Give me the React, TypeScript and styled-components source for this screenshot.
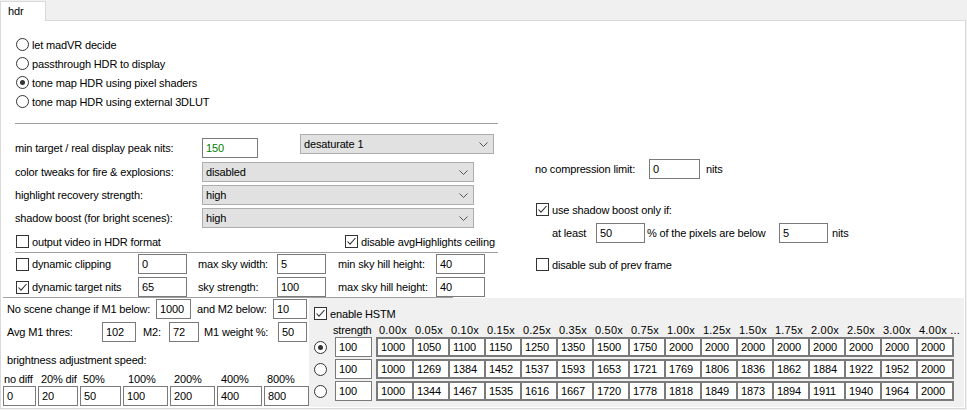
import React from 'react';
import styled, { createGlobalStyle } from 'styled-components';

const GlobalStyle = createGlobalStyle`
  html, body {
    margin: 0;
    padding: 0;
    background: #f0f0f0;
  }
  body {
    font-family: 'Liberation Sans', Arial, sans-serif;
    font-size: 11px;
    letter-spacing: -0.15px;
    color: #000;
  }
  * { box-sizing: border-box; }
`;

const Window = styled.div`
  width: 967px;
  height: 410px;
  background: #f0f0f0;
`;

const TabStrip = styled.div`
  display: flex;
  height: 20px;
  padding-top: 1px;
`;

const Tab = styled.div`
  width: 46px;
  height: 20px;
  padding-left: 7px;
  line-height: 18px;
  background: #fff;
  border: 1px solid #d9d9d9;
  border-bottom: none;
  position: relative;
  z-index: 1;
`;

const Panel = styled.div`
  width: 966px;
  background: #fff;
  border: 1px solid #d9d9d9;
  padding-bottom: 1px;
`;

const TopArea = styled.div`
  display: flex;
  height: 276px;
`;

const LeftColumn = styled.div`
  width: 497px;
  padding-left: 14px;
  display: flex;
  flex-direction: column;
`;

const RightColumn = styled.div`
  margin-left: 37px;
  display: flex;
  flex-direction: column;
`;

const RadioList = styled.div`
  margin-top: 14px;
  display: flex;
  flex-direction: column;
`;

const RadioRow = styled.div`
  display: flex;
  align-items: center;
  height: 19px;
  padding-left: 1px;
  gap: 3px;
`;

const RadioCircle = styled.span<{ $checked?: boolean }>`
  width: 13px;
  height: 13px;
  border-radius: 50%;
  border: 1px solid #333;
  background: #fff;
  display: flex;
  align-items: center;
  justify-content: center;
  flex: none;
  &::after {
    content: '';
    display: ${p => (p.$checked ? 'block' : 'none')};
    width: 5px;
    height: 5px;
    border-radius: 50%;
    background: #333;
  }
`;

const Separator = styled.div<{ $top: number; $width: number; $left?: number }>`
  margin-top: ${p => p.$top}px;
  margin-left: ${p => p.$left ?? 0}px;
  width: ${p => p.$width}px;
  height: 1px;
  background: #a0a0a0;
  flex: none;
`;

const FormRow = styled.div<{ $top: number; $height?: number; $align?: string }>`
  display: flex;
  align-items: ${p => p.$align ?? 'center'};
  margin-top: ${p => p.$top}px;
  height: ${p => p.$height ?? 20}px;
  flex: none;
`;

const Label = styled.span<{ $width?: number; $left?: number }>`
  width: ${p => (p.$width ? `${p.$width}px` : 'auto')};
  margin-left: ${p => p.$left ?? 0}px;
  height: 20px;
  line-height: 20px;
  white-space: nowrap;
  flex: none;
`;

const TextBox = styled.div<{ $width: number; $green?: boolean }>`
  width: ${p => p.$width}px;
  height: 20px;
  line-height: 18px;
  padding-left: 3px;
  border: 1px solid #7a7a7a;
  background: #fff;
  color: ${p => (p.$green ? '#008000' : '#000')};
  flex: none;
  white-space: nowrap;
  overflow: hidden;
`;

const SelectBox = styled.div<{ $width: number; $left?: number; $top?: boolean }>`
  width: ${p => p.$width}px;
  margin-left: ${p => p.$left ?? 0}px;
  align-self: ${p => (p.$top ? 'flex-start' : 'center')};
  height: 20px;
  padding: 0 5px 0 3px;
  border: 1px solid #adadad;
  background: #e1e1e1;
  display: flex;
  align-items: center;
  justify-content: space-between;
  flex: none;
`;

const Chevron = () => (
  <svg width="9" height="5" viewBox="0 0 9 5">
    <polyline points="0.5,0.5 4.5,4.5 8.5,0.5" fill="none" stroke="#555" strokeWidth="1" />
  </svg>
);

const Select = ({ value, width, left, top }: { value: string; width: number; left?: number; top?: boolean }) => (
  <SelectBox $width={width} $left={left} $top={top}>
    <span>{value}</span>
    <Chevron />
  </SelectBox>
);

const CheckLine = styled.div<{ $left?: number }>`
  display: flex;
  align-items: center;
  gap: 3px;
  margin-left: ${p => p.$left ?? 0}px;
  white-space: nowrap;
`;

const Box = styled.span`
  width: 13px;
  height: 13px;
  border: 1px solid #333;
  background: #fff;
  display: flex;
  flex: none;
`;

const Check = ({ checked, label, left }: { checked?: boolean; label: string; left?: number }) => (
  <CheckLine $left={left}>
    <Box>
      {checked && (
        <svg width="11" height="11" viewBox="0 0 11 11">
          <polyline points="1.5,5.5 4,8.2 9.5,2" fill="none" stroke="#333" strokeWidth="1.1" />
        </svg>
      )}
    </Box>
    <span>{label}</span>
  </CheckLine>
);

const CheckPair = styled.div`
  display: grid;
  grid-template-columns: 329px auto;
  align-items: center;
  margin-top: 6px;
  height: 15px;
  padding-left: 1px;
`;

const DynGrid = styled.div`
  margin-top: 1px;
  display: grid;
  grid-template-columns: 123px 49px 90px 49px 110px 49px;
  grid-auto-rows: 20px;
  row-gap: 3px;
  align-items: center;
`;

const DynLabel = styled.span<{ $pad: number }>`
  padding-left: ${p => p.$pad}px;
  white-space: nowrap;
`;

const CheckRowR = styled.div<{ $top: number }>`
  margin-top: ${p => p.$top}px;
  height: 13px;
  display: flex;
  align-items: center;
  padding-left: 1px;
`;

const BottomArea = styled.div`
  display: flex;
  height: 109px;
`;

const BottomLeft = styled.div`
  width: 308px;
  display: flex;
  flex-direction: column;
  padding-left: 6px;
`;

const Caption = styled.div`
  margin-top: 10px;
  height: 16px;
  line-height: 16px;
`;

const SpeedRow = styled.div`
  display: flex;
  gap: 2px;
  margin-top: 5px;
  margin-left: -4px;
`;

const SpeedCell = styled.div<{ $width: number }>`
  width: ${p => p.$width}px;
  display: flex;
  flex-direction: column;
`;

const SpeedLabel = styled.span<{ $indent: number }>`
  height: 13px;
  line-height: 13px;
  padding-left: ${p => p.$indent}px;
  white-space: nowrap;
`;

const HstmPanel = styled.div`
  flex: 1;
  margin-right: 1px;
  background: #f0f0f0;
  padding-left: 5px;
  display: flex;
  flex-direction: column;
`;

const HstmCheck = styled.div`
  margin-top: 9px;
  height: 13px;
  display: flex;
  align-items: center;
`;

const HstmRow = styled.div<{ $top: number; $height: number }>`
  display: flex;
  align-items: center;
  margin-top: ${p => p.$top}px;
  height: ${p => p.$height}px;
`;

const RadioSlot = styled.div`
  width: 21px;
  display: flex;
  flex: none;
`;

const HeadStrength = styled.span`
  width: 41px;
  margin-left: -2px;
  padding-right: 0;
  flex: none;
  white-space: nowrap;
`;

const HeadCells = styled.div`
  display: flex;
  margin-left: 1px;
`;

const HeadCell = styled.span`
  width: 36px;
  padding-left: 4px;
  flex: none;
  white-space: nowrap;
  letter-spacing: 0.2px;
`;

const ValueRow = styled.div`
  display: flex;
  margin-left: 4px;
  border: 1px solid #7a7a7a;
  height: 20px;
`;

const ValueCell = styled.div`
  width: 36px;
  height: 18px;
  line-height: 16px;
  padding-left: 3px;
  border: 1px solid #7a7a7a;
  background: #fff;
  flex: none;
`;

const headers = ['0.00x', '0.05x', '0.10x', '0.15x', '0.25x', '0.35x', '0.50x', '0.75x', '1.00x', '1.25x', '1.50x', '1.75x', '2.00x', '2.50x', '3.00x', '4.00x ...'];

const curves = [
  [1000, 1050, 1100, 1150, 1250, 1350, 1500, 1750, 2000, 2000, 2000, 2000, 2000, 2000, 2000, 2000],
  [1000, 1269, 1384, 1452, 1537, 1593, 1653, 1721, 1769, 1806, 1836, 1862, 1884, 1922, 1952, 2000],
  [1000, 1344, 1467, 1535, 1616, 1667, 1720, 1778, 1818, 1849, 1873, 1894, 1911, 1940, 1964, 2000],
];

const speeds = [
  { label: 'no diff', value: '0', width: 33, indent: 1 },
  { label: '20% dif', value: '20', width: 40, indent: 3 },
  { label: '50%', value: '50', width: 41, indent: 3 },
  { label: '100%', value: '100', width: 45, indent: 5 },
  { label: '200%', value: '200', width: 45, indent: 4 },
  { label: '400%', value: '400', width: 45, indent: 4 },
  { label: '800%', value: '800', width: 45, indent: 3 },
];

const modes = [
  'let madVR decide',
  'passthrough HDR to display',
  'tone map HDR using pixel shaders',
  'tone map HDR using external 3DLUT',
];

export default function App() {
  return (
    <Window>
      <GlobalStyle />
      <TabStrip>
        <Tab>hdr</Tab>
      </TabStrip>
      <Panel>
        <TopArea>
          <LeftColumn>
            <RadioList>
              {modes.map((m, i) => (
                <RadioRow key={m}>
                  <RadioCircle $checked={i === 2} />
                  <span>{m}</span>
                </RadioRow>
              ))}
            </RadioList>
            <Separator $top={12} $width={483} />

            <FormRow $top={10} $height={24} $align="flex-end">
              <Label $width={187}>min target / real display peak nits:</Label>
              <TextBox $width={56} $green>150</TextBox>
              <Select value="desaturate 1" width={194} left={42} top />
            </FormRow>
            <FormRow $top={4}>
              <Label $width={187}>color tweaks for fire &amp; explosions:</Label>
              <Select value="disabled" width={272} />
            </FormRow>
            <FormRow $top={3}>
              <Label $width={187}>highlight recovery strength:</Label>
              <Select value="high" width={272} />
            </FormRow>
            <FormRow $top={3}>
              <Label $width={187}>shadow boost (for bright scenes):</Label>
              <Select value="high" width={272} />
            </FormRow>

            <CheckPair>
              <Check label="output video in HDR format" />
              <Check checked label="disable avgHighlights ceiling" />
            </CheckPair>
            <Separator $top={3} $width={483} />

            <DynGrid>
              <Check label="dynamic clipping" left={1} />
              <TextBox $width={49}>0</TextBox>
              <DynLabel $pad={11}>max sky width:</DynLabel>
              <TextBox $width={49}>5</TextBox>
              <DynLabel $pad={12}>min sky hill height:</DynLabel>
              <TextBox $width={49}>40</TextBox>

              <Check checked label="dynamic target nits" left={1} />
              <TextBox $width={49}>65</TextBox>
              <DynLabel $pad={11}>sky strength:</DynLabel>
              <TextBox $width={49}>100</TextBox>
              <DynLabel $pad={12}>max sky hill height:</DynLabel>
              <TextBox $width={49}>40</TextBox>
            </DynGrid>
          </LeftColumn>

          <RightColumn>
            <FormRow $top={138}>
              <Label $width={114}>no compression limit:</Label>
              <TextBox $width={51}>0</TextBox>
              <Label $left={6}>nits</Label>
            </FormRow>
            <CheckRowR $top={24}>
              <Check checked label="use shadow boost only if:" />
            </CheckRowR>
            <FormRow $top={7}>
              <Label $width={61} style={{ paddingLeft: 17 }}>at least</Label>
              <TextBox $width={49}>50</TextBox>
              <Label $width={132} $left={2}>% of the pixels are below</Label>
              <TextBox $width={49}>5</TextBox>
              <Label $left={4}>nits</Label>
            </FormRow>
            <CheckRowR $top={15}>
              <Check label="disable sub of prev frame" />
            </CheckRowR>
          </RightColumn>
        </TopArea>

        <Separator $top={0} $width={450} $left={2} />

        <BottomArea>
          <BottomLeft>
            <FormRow $top={1}>
              <Label $width={149}>No scene change if M1 below:</Label>
              <TextBox $width={35}>1000</TextBox>
              <Label $width={76} $left={6}>and M2 below:</Label>
              <TextBox $width={34}>10</TextBox>
            </FormRow>
            <FormRow $top={3}>
              <Label $width={95}>Avg M1 thres:</Label>
              <TextBox $width={34}>102</TextBox>
              <Label $width={26} $left={7}>M2:</Label>
              <TextBox $width={30}>72</TextBox>
              <Label $width={74} $left={5}>M1 weight %:</Label>
              <TextBox $width={29}>50</TextBox>
            </FormRow>
            <Caption>brightness adjustment speed:</Caption>
            <SpeedRow>
              {speeds.map(s => (
                <SpeedCell key={s.label} $width={s.width}>
                  <SpeedLabel $indent={s.indent}>{s.label}</SpeedLabel>
                  <TextBox $width={s.width}>{s.value}</TextBox>
                </SpeedCell>
              ))}
            </SpeedRow>
          </BottomLeft>

          <HstmPanel>
            <HstmCheck>
              <Check checked label="enable HSTM" />
            </HstmCheck>
            <HstmRow $top={3} $height={13}>
              <RadioSlot />
              <HeadStrength>strength</HeadStrength>
              <HeadCells>
                {headers.map(h => (
                  <HeadCell key={h}>{h}</HeadCell>
                ))}
              </HeadCells>
            </HstmRow>
            {curves.map((row, i) => (
              <HstmRow key={i} $top={i === 0 ? 1 : 2} $height={20}>
                <RadioSlot>
                  <RadioCircle $checked={i === 0} />
                </RadioSlot>
                <TextBox $width={37}>100</TextBox>
                <ValueRow>
                  {row.map((v, j) => (
                    <ValueCell key={j}>{v}</ValueCell>
                  ))}
                </ValueRow>
              </HstmRow>
            ))}
          </HstmPanel>
        </BottomArea>
      </Panel>
    </Window>
  );
}
